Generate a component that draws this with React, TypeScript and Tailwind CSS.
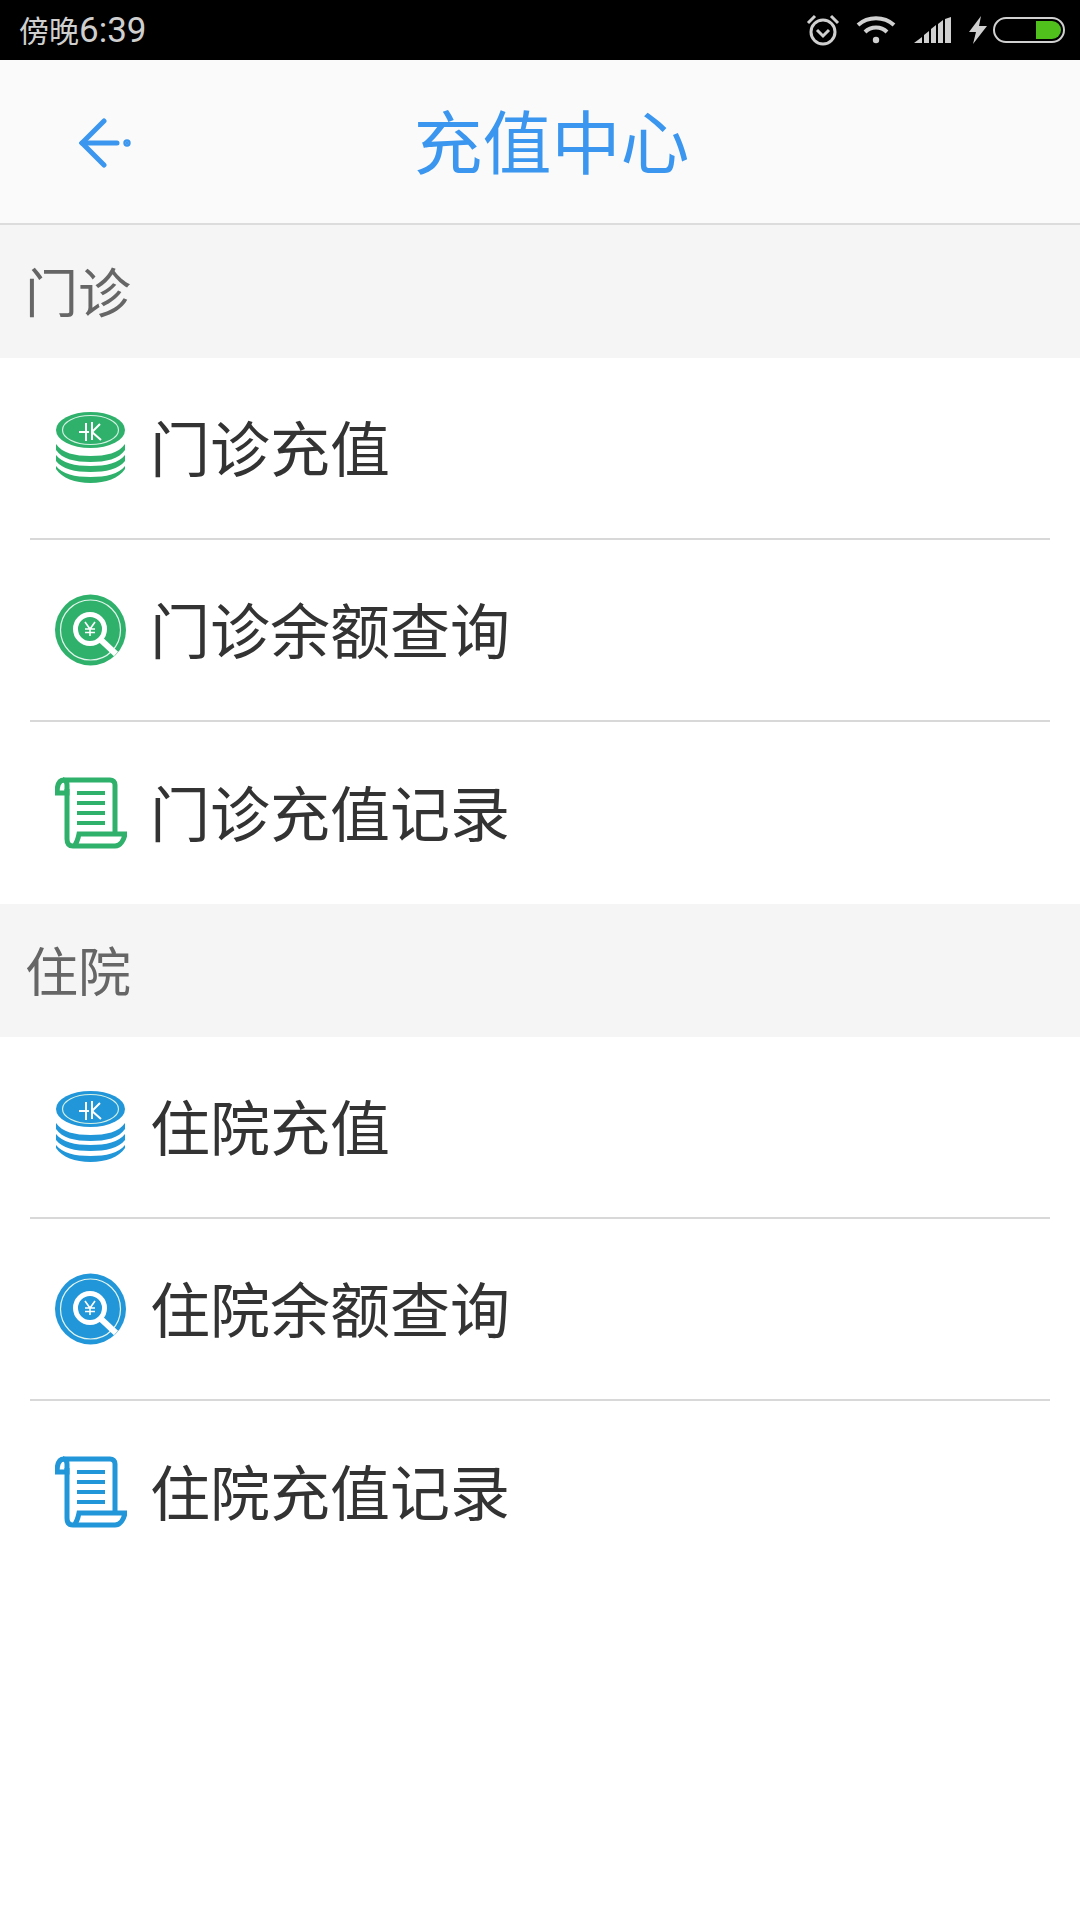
const GREEN = "#2fb16c";
const BLUE = "#2196d9";

function CoinsIcon({ color }: { color: string }) {
  return (
    <svg viewBox="0 0 72 72" className="h-[72px] w-[72px] overflow-visible">
      <path d="M1 32 C7 41 20 44 35.5 44 C51 44 64 41 70 32 L70 38 C64 47 51 50 35.5 50 C20 50 7 47 1 38 Z" fill={color} />
      <path d="M1 43 C7 51 20 54 35.5 54 C51 54 64 51 70 43 L70 49 C64 57 51 60 35.5 60 C20 60 7 57 1 49 Z" fill={color} />
      <path d="M1 54 C7 62 20 65 35.5 65 C51 65 64 62 70 54 L70 57 C64 66 51 71 35.5 71 C20 71 7 66 1 57 Z" fill={color} />
      <ellipse cx="35.5" cy="18" rx="34.5" ry="18" fill={color} />
      <ellipse cx="35.5" cy="18" rx="28" ry="14.5" fill="none" stroke="#d5f0e2" strokeWidth="1.2" />
      <path d="M24 20 H34 M31 11 V29 M37 10 V28 M37 20 L45 12 M37 20 L46 28" stroke="#fff" strokeWidth="2" fill="none" />
    </svg>
  );
}

function SearchIcon({ color }: { color: string }) {
  return (
    <svg viewBox="0 0 72 72" className="h-[72px] w-[72px]">
      <circle cx="35.5" cy="36" r="35.5" fill={color} />
      <circle cx="35.5" cy="36" r="30" fill="none" stroke="#e3f5ec" strokeWidth="1.2" />
      <path d="M46 46 L61 60" stroke="#fff" strokeWidth="6" />
      <circle cx="35" cy="35" r="14.5" fill={color} stroke="#fff" strokeWidth="5" />
      <path d="M30 28 L35 35 L40 28 M30 35 H40 M30 38.5 H40 M35 35 V42" stroke="#fff" strokeWidth="1.6" fill="none" />
    </svg>
  );
}

function ScrollIcon({ color }: { color: string }) {
  return (
    <svg viewBox="0 0 72 72" className="h-[72px] w-[72px]" fill="none" stroke={color} strokeWidth="5">
      <path d="M9 3 H55 C58 3 60 5 60 8 V57" />
      <path d="M9 3 C4 3 2 8 2 16 H12 V8 C12 5 11 3 8 3" />
      <path d="M12 12 V62 C12 67 14 69 18 69 H60 C66 69 69 62 70 57 H24 C23 62 22 66 19 69" />
      <path d="M22 16 H50 M22 26 H50 M22 36 H50 M22 46 H50" strokeWidth="4" />
    </svg>
  );
}

type Row = { label: string; icon: "coins" | "search" | "scroll" };

function Item({ row, color, last }: { row: Row; color: string; last: boolean }) {
  return (
    <div className={last ? "mx-[30px] flex h-[182px] items-center" : "mx-[30px] flex h-[182px] items-center border-b-2 border-[#d8d8d8]"}>
      <div className="ml-[25px] flex h-[72px] w-[72px] shrink-0">
        {row.icon === "coins" && <CoinsIcon color={color} />}
        {row.icon === "search" && <SearchIcon color={color} />}
        {row.icon === "scroll" && <ScrollIcon color={color} />}
      </div>
      <span className="ml-[23px] pb-[5px] text-[60px] leading-none text-[#333333]">{row.label}</span>
    </div>
  );
}

function Section({ title, rows, color }: { title: string; rows: Row[]; color: string }) {
  return (
    <section>
      <div className="flex h-[133px] items-center bg-[#f5f5f5] pb-[2px] pl-[25px] text-[53px] leading-none text-[#666666]">{title}</div>
      <div className="bg-white">
        {rows.map((r, i) => (
          <Item key={r.label} row={r} color={color} last={i === rows.length - 1} />
        ))}
      </div>
    </section>
  );
}

function StatusBar() {
  return (
    <div className="flex h-[60px] items-center justify-between bg-black pl-[19px] pr-[15px] text-[#cfcfcf]">
      <span className="text-[30px] leading-none">
        傍晚<span className="font-['Roboto',sans-serif] text-[35px] font-normal">6:39</span>
      </span>
      <div className="flex items-center">
        <svg viewBox="0 0 34 34" className="mr-[16px] h-[34px] w-[34px]" fill="none" stroke="#d0d0d0" strokeWidth="3">
          <circle cx="17" cy="19" r="12" />
          <path d="M11 17 L17 23 L23 17" />
          <path d="M2 10 L9 3 M32 10 L25 3" />
        </svg>
        <svg viewBox="0 0 40 28" className="mr-[18px] h-[28px] w-[40px]" fill="none" stroke="#d0d0d0" strokeWidth="4">
          <path d="M2 9 C12 0 28 0 38 9" />
          <path d="M9 16 C15 10 25 10 31 16" />
          <circle cx="20" cy="24" r="3.2" fill="#d0d0d0" stroke="none" />
        </svg>
        <svg viewBox="0 0 38 26" className="mr-[17px] h-[26px] w-[38px]" fill="#d0d0d0">
          <path d="M0 26 L8 20 V26 Z M10 18 L15 14 V26 H10 Z M17 12 L22 8 V26 H17 Z M24 7 L29 3 V26 H24 Z M31 2 L37 0 V26 H31 Z" />
        </svg>
        <svg viewBox="0 0 18 28" className="mr-[6px] h-[28px] w-[18px]" fill="#d0d0d0">
          <path d="M12 0 L0 16 H7 L4 28 L18 10 H10 Z" />
        </svg>
        <div className="flex h-[26px] w-[72px] justify-end overflow-hidden rounded-full border-2 border-[#d0d0d0] p-[2px]">
          <div className="h-full w-[25px] rounded-r-full bg-[#4fc01c]" />
        </div>
      </div>
    </div>
  );
}

export default function App() {
  return (
    <div className="h-[1920px] w-[1080px] overflow-hidden bg-white font-['Noto_Sans_CJK_SC','Liberation_Sans',sans-serif]">
      <StatusBar />
      <header className="relative flex h-[165px] items-center justify-center border-b-2 border-[#dcdcdc] bg-[#fafafa] pb-[5px] pl-[23px]">
        <svg viewBox="0 0 52 50" className="absolute left-[79px] top-[58px] h-[50px] w-[52px]" fill="none" stroke="#3a96ee" strokeWidth="5" strokeLinecap="round">
          <path d="M25 3 L3 25 L25 47" />
          <path d="M3 25 H38" />
          <circle cx="48" cy="25" r="1.2" fill="#3a96ee" />
        </svg>
        <h1 className="text-[69px] font-normal leading-none text-[#3a96ee]">充值中心</h1>
      </header>
      <Section
        title="门诊"
        color={GREEN}
        rows={[
          { label: "门诊充值", icon: "coins" },
          { label: "门诊余额查询", icon: "search" },
          { label: "门诊充值记录", icon: "scroll" },
        ]}
      />
      <Section
        title="住院"
        color={BLUE}
        rows={[
          { label: "住院充值", icon: "coins" },
          { label: "住院余额查询", icon: "search" },
          { label: "住院充值记录", icon: "scroll" },
        ]}
      />
    </div>
  );
}
